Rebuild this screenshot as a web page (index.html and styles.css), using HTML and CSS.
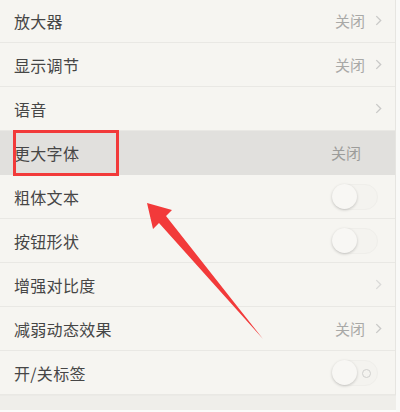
FILE: index.html
```html
<!DOCTYPE html>
<html lang="zh-CN">
<head>
  <meta charset="UTF-8">
  <meta name="viewport" content="width=device-width, initial-scale=1.0">
  <title>辅助功能</title>
  <link rel="stylesheet" href="styles.css">
</head>
<body>
  <div class="screen">
    <ul class="list">
      <li class="row"><span class="label">放大器</span><span class="value">关闭<svg class="chev" viewBox="0 0 6 10"><path d="M1 1l4 4-4 4"/></svg></span></li>
      <li class="row"><span class="label">显示调节</span><span class="value">关闭<svg class="chev" viewBox="0 0 6 10"><path d="M1 1l4 4-4 4"/></svg></span></li>
      <li class="row"><span class="label">语音</span><span class="value"><svg class="chev" viewBox="0 0 6 10"><path d="M1 1l4 4-4 4"/></svg></span></li>
      <li class="row active"><span class="label">更大字体</span><span class="value">关闭<span class="chev-gap"></span></span></li>
      <li class="row"><span class="label">粗体文本</span><span class="toggle"><span class="knob"></span></span></li>
      <li class="row"><span class="label">按钮形状</span><span class="toggle"><span class="knob"></span></span></li>
      <li class="row"><span class="label">增强对比度</span><span class="value"><svg class="chev faint" viewBox="0 0 6 10"><path d="M1 1l4 4-4 4"/></svg></span></li>
      <li class="row"><span class="label">减弱动态效果</span><span class="value">关闭<svg class="chev" viewBox="0 0 6 10"><path d="M1 1l4 4-4 4"/></svg></span></li>
      <li class="row"><span class="label">开/关标签</span><span class="toggle labels"><span class="knob"></span><span class="off-mark"></span></span></li>
    </ul>
    <div class="footer"></div>

    <!-- 标注 -->
    <div class="mark-box"></div>
    <svg class="arrow" width="400" height="412" viewBox="0 0 400 412">
      <polygon points="147,203 172,210 166,216 263,339 159,223 153,229" fill="#f23a3a"/>
    </svg>
  </div>
</body>
</html>
```

FILE: styles.css
```css
* { box-sizing: border-box; margin: 0; padding: 0; }
html, body { width: 100%; height: 100%; }
body {
  font-family: "Noto Sans CJK SC", "Noto Sans", sans-serif;
  background: #f6f5f1; overflow: hidden;
}
.screen {
  position: relative; width: 400px; height: 412px;
  display: flex; flex-direction: column;
  border-right: 4px solid #f9f9f7;
}
/* 列表 */
.list {
  list-style: none; margin-top: -1px;
  border-right: 1px solid #e6e5e1;
}
.row {
  height: 44px; padding: 0 13px 0 14px;
  display: flex; align-items: center; justify-content: space-between;
  border-bottom: 1px solid #e9e8e4;
}
.row.active { background: #e1e0dd; border-bottom-color: #e1e0dd; }
.label { font-size: 16px; color: #464646; letter-spacing: 0.3px; }
.value {
  display: flex; align-items: center; gap: 10px;
  font-size: 15px; color: #a9a9a7;
}
.row.active .value { color: #9c9c9a; padding-right: 4px; }
.chev-gap { width: 7px; }
.chev { width: 7px; height: 11px; fill: none; stroke: #c9c9c7; stroke-width: 1.2; }
.chev.faint { stroke: #dadad8; }
/* 开关 */
.toggle {
  position: relative; width: 46px; height: 26px; margin-right: 4px;
  border-radius: 13px; background: #f4f3ef;
  border: 1px solid #efeeea;
}
.knob {
  position: absolute; left: -1px; top: -1px; width: 25px; height: 25px;
  border-radius: 50%; background: #f8f7f4;
  box-shadow: 0 1px 3px rgba(0,0,0,0.2);
}
.off-mark {
  position: absolute; right: 6px; top: 8px; width: 9px; height: 9px;
  border-radius: 50%; border: 1px solid #cfcfcd;
}
.footer {
  flex: 1; background: #efeeea; border-top: 1px solid #ebeae6;
  border-bottom: 2px solid #fbfbfa;
}
/* 标注 */
.mark-box {
  position: absolute; left: 13px; top: 130px; width: 106px; height: 46px;
  border: 3px solid #f23a3a;
}
.arrow { position: absolute; left: 0; top: 0; }
```
